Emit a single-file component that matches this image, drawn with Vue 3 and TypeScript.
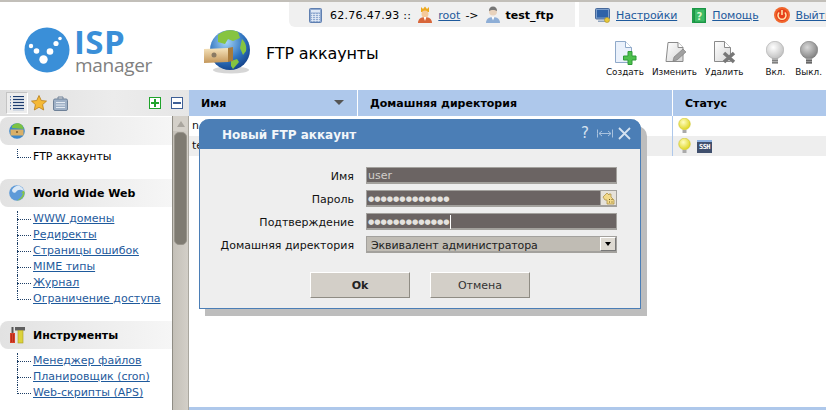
<script setup lang="ts">
interface Section { title: string; icon: string; links: string[]; plain?: boolean }
const sections: Section[] = [
  { title: 'Главное', icon: 'main', links: ['FTP аккаунты'], plain: true },
  { title: 'World Wide Web', icon: 'www', links: ['WWW домены', 'Редиректы', 'Страницы ошибок', 'MIME типы', 'Журнал', 'Ограничение доступа'] },
  { title: 'Инструменты', icon: 'tools', links: ['Менеджер файлов', 'Планировщик (cron)', 'Web-скрипты (APS)'] },
]
const dots = '●'.repeat(13)
</script>

<template>
  <div class="page">
    <svg width="0" height="0" class="defs">
      <defs>
        <radialGradient id="globe" cx="40%" cy="30%" r="75%">
          <stop offset="0" stop-color="#a8d6f7" /><stop offset=".6" stop-color="#2f74c0" /><stop offset="1" stop-color="#123f86" />
        </radialGradient>
        <linearGradient id="drawer" x1="0" y1="0" x2="0" y2="1">
          <stop offset="0" stop-color="#f6e4bd" /><stop offset="1" stop-color="#c4975a" />
        </linearGradient>
        <radialGradient id="bulbOff" cx="40%" cy="35%" r="70%">
          <stop offset="0" stop-color="#ffffff" /><stop offset="1" stop-color="#bdbdbd" />
        </radialGradient>
        <radialGradient id="bulbDim" cx="40%" cy="35%" r="70%">
          <stop offset="0" stop-color="#d8d8d8" /><stop offset="1" stop-color="#7d7d7d" />
        </radialGradient>
        <radialGradient id="bulbOn" cx="40%" cy="35%" r="70%">
          <stop offset="0" stop-color="#fffdc0" /><stop offset="1" stop-color="#dcd318" />
        </radialGradient>
        <linearGradient id="paper" x1="0" y1="0" x2="1" y2="1">
          <stop offset="0" stop-color="#ffffff" /><stop offset="1" stop-color="#d5d5d5" />
        </linearGradient>
      </defs>
    </svg>

    <div class="topline"></div>
    <div class="topbars">
      <div class="session">
        <svg width="13" height="15" viewBox="0 0 13 15"><rect x=".5" y=".5" width="12" height="14" rx="1" fill="#8fa9d0" stroke="#5f7fb0" /><rect x="2" y="2" width="9" height="2.500" fill="#dfe8f5" /><path d="M2 6.500h9M2 8.500h9M2 10.500h9M2 12.500h9M3.500 5.500v8M6.500 5.500v8M9.500 5.500v8" stroke="#e6edf7" stroke-width=".8" /></svg>
        <span class="ip">62.76.47.93 ::</span>
        <svg width="14" height="18" viewBox="0 0 14 18"><path d="M3 1l2 2 2-2.500 2 2.500 2-2v5H3z" fill="#eda91f" /><circle cx="7" cy="8" r="3.500" fill="#f5c99a" /><path d="M0 17c0-4 3-6 7-6s7 2 7 6z" fill="#d8663a" /><path d="M5.500 11L7 15l1.500-4z" fill="#fff" /></svg>
        <a class="link">root</a>
        <span class="arrow">-&gt;</span>
        <svg width="14" height="18" viewBox="0 0 14 18"><circle cx="7" cy="5.500" r="4" fill="#e8d2bc" /><path d="M3 5c0-3 1.500-4.500 4-4.500S11 2 11 5C9 3.500 5 3.500 3 5z" fill="#777" /><path d="M0 17c0-4 3-6 7-6s7 2 7 6z" fill="#8eaed6" /><path d="M5.500 11L7 14.500 8.500 11z" fill="#fff" /></svg>
        <b class="who">test_ftp</b>
      </div>
      <nav class="usernav">
        <svg width="15" height="15" viewBox="0 0 15 15"><rect x=".5" y=".5" width="14" height="10.500" rx="1" fill="#7d9fcc" stroke="#47699b" /><rect x="2" y="2" width="11" height="7.500" fill="#2e62a8" /><path d="M3 12.500h8v1.500H3z" fill="#8fa3bd" /><circle cx="12" cy="12" r="2.500" fill="#e8c93a" stroke="#a88d1c" stroke-width=".6" /></svg>
        <a class="link navlink">Настройки</a>
        <svg width="14" height="15" viewBox="0 0 14 15" class="nav-gap"><rect width="14" height="15" fill="#1f9d4b" /><rect x="2.500" y="1" width="10.500" height="13" fill="#3dbb66" stroke="#118539" stroke-width=".6" /><text x="7.500" y="11.500" text-anchor="middle" font-size="10" font-family="DejaVu Sans" font-weight="700" fill="#d9f7c8">?</text></svg>
        <a class="link navlink">Помощь</a>
        <svg width="16" height="16" viewBox="0 0 16 16" class="nav-gap"><circle cx="8" cy="8" r="8" fill="#f0662c" /><circle cx="8" cy="8" r="6" fill="#e8401a" /><path d="M5.200 5.500a4 4 0 1 0 5.600 0" fill="none" stroke="#ffe9b0" stroke-width="1.500" /><path d="M8 3v5" stroke="#ffe9b0" stroke-width="1.500" /></svg>
        <a class="link navlink">Выйти</a>
      </nav>
    </div>

    <header class="head">
      <div class="logo">
        <svg width="46" height="46" viewBox="0 0 46 46">
          <circle cx="23" cy="23" r="22.500" fill="#3a8fd8" />
          <g fill="#fff"><circle cx="19.500" cy="32.500" r="4.200" /><circle cx="26" cy="24.500" r="3.300" /><circle cx="12.500" cy="24" r="2.800" /><circle cx="7" cy="19" r="2.200" /><circle cx="32" cy="16.500" r="2.600" /><circle cx="36" cy="11.500" r="1.800" /></g>
        </svg>
        <div class="logotext"><span class="isp">ISP</span><span class="mgr">manager</span></div>
      </div>
      <svg class="pageicon" width="48" height="48" viewBox="0 0 48 48">
        <ellipse cx="27" cy="41" rx="18" ry="3.500" fill="#bbb" opacity=".6" />
        <circle cx="26" cy="21" r="20" fill="url(#globe)" />
        <path d="M14 6c5-5 14-6 20-3l2 6-7 3-5-2-3 5-7-2zM38 10c3 3 5 7 4 12l-3 4-3-7zM27 32l6-2 2 3-6 7-2-3z" fill="#86c440" />
        <path d="M0 20l24-1v14L0 34z" fill="url(#drawer)" />
        <path d="M24 19l5-1v14l-5 1z" fill="#a87b3c" />
        <circle cx="10" cy="26" r="2.500" fill="#8a7a63" />
      </svg>
      <h1 class="title">FTP аккаунты</h1>
      <div class="tools">
        <div class="tool">
          <svg width="24" height="24" viewBox="0 0 24 24"><path d="M2.500 .5h10l6 6v15h-16z" fill="#eaf1fb" stroke="#8fa9c9" /><path d="M12.500 .5v6h6" fill="#fff" stroke="#8fa9c9" /><path d="M15 10.500h4v4.500h4v4h-4v4.500h-4V19h-4.500v-4H15z" fill="#4cc04c" stroke="#2f9a38" /></svg>
          <span>Создать</span>
        </div>
        <div class="tool">
          <svg width="24" height="24" viewBox="0 0 24 24"><path d="M6 1.500h10l5 5v14H4z" fill="url(#paper)" stroke="#8a8a8a" /><path d="M16 1.500v5h5" fill="#fff" stroke="#8a8a8a" /><path d="M11 20l1-4 9-8 3 3-9 8z" fill="#a0a0a0" stroke="#777" stroke-width=".6" /></svg>
          <span>Изменить</span>
        </div>
        <div class="tool">
          <svg width="24" height="24" viewBox="0 0 24 24"><path d="M2.500 .5h10l6 6v14h-16z" fill="url(#paper)" stroke="#8a8a8a" /><path d="M12.500 .5v6h6" fill="#fff" stroke="#8a8a8a" /><path d="M12 12l10 9M22 12l-10 9" stroke="#777" stroke-width="3.500" /></svg>
          <span>Удалить</span>
        </div>
        <div class="tool tool-sep">
          <svg width="18" height="24" viewBox="0 0 18 24"><circle cx="9" cy="9" r="8.700" fill="url(#bulbOff)" stroke="#aaa" stroke-width=".6" /><path d="M6 17h6v6H6z" fill="#b0b0b0" /><path d="M6 19.500h6M6 21.500h6" stroke="#808080" /></svg>
          <span>Вкл.</span>
        </div>
        <div class="tool tool-last">
          <svg width="18" height="24" viewBox="0 0 18 24"><circle cx="9" cy="9" r="8.700" fill="url(#bulbDim)" stroke="#777" stroke-width=".6" /><path d="M6 17h6v6H6z" fill="#999" /><path d="M6 19.500h6M6 21.500h6" stroke="#666" /></svg>
          <span>Выкл.</span>
        </div>
      </div>
    </header>

    <main class="body">
      <aside class="side">
        <div class="sidetools">
          <div class="tab-active">
            <svg width="14" height="16" viewBox="0 0 14 16"><path d="M3 1.500h11M3 4.500h11M3 7.500h11M3 10.500h11M3 13.500h11" stroke="#1d3c6e" stroke-width="1.200" /><path d="M3 3h11M3 6h11M3 9h11M3 12h11M3 15h11" stroke="#a9bcd6" stroke-width=".8" /><path d="M.5 1v15" stroke="#5f7fb0" stroke-dasharray="1.500 1.500" /></svg>
          </div>
          <svg class="star" width="16" height="16" viewBox="0 0 16 16"><path d="M8 .5l2.300 5 5.200.6-3.900 3.500 1.100 5.400L8 12.300 3.300 15l1.100-5.400L.5 6.100l5.200-.6z" fill="#f5b935" stroke="#b97d18" stroke-width=".8" /></svg>
          <svg class="case" width="15" height="15" viewBox="0 0 15 15"><rect x=".5" y="3" width="14" height="11.500" rx="1.500" fill="#9eb0c6" stroke="#6e8198" /><path d="M5 3V1h5v2" fill="none" stroke="#6e8198" /><path d="M3 6.500h9M3 9h9M3 11.500h9" stroke="#e4ebf3" /></svg>
          <span class="spacer"></span>
          <span class="box plus"></span>
          <span class="box minus"></span>
        </div>
        <div class="sideflow">
          <div class="menu">
            <section v-for="s in sections" :key="s.title" class="sec">
              <div class="sechead">
                <svg v-if="s.icon === 'main'" width="16" height="16" viewBox="0 0 16 16"><circle cx="8" cy="8" r="7.800" fill="#3c87c9" /><path d="M3 3c3-3.500 7-3.500 10-1l2 4-12-1z" fill="#7cc343" /><path d="M1.500 6.500h13v6h-13z" fill="#d9b068" /><circle cx="8" cy="9" r="1" fill="#7a5a2a" /></svg>
                <svg v-else-if="s.icon === 'www'" width="16" height="16" viewBox="0 0 16 16"><circle cx="8" cy="8" r="7.800" fill="#5d9ad8" /><path d="M9 .5C12 1 15 4 15.500 7 13 4 9 4 7 7 5 9 3 7 3 5 4 3 6 1 9 .5z" fill="#dce9f6" /><path d="M15.500 7c.5 4-3 8.500-8 8.500 3-1 6-4 6.500-7.500l-2 .5 2.500-3z" fill="#88c640" /></svg>
                <svg v-else width="16" height="18" viewBox="0 0 16 18"><path d="M3.500 1v6" stroke="#555" stroke-width="2" /><path d="M1 7h5v10H1z" fill="#d8402a" /><path d="M2.500 8v8M4.500 8v8" stroke="#9c2212" stroke-width=".6" /><path d="M6 1h10v3.500H6z" fill="#5f5f5f" /><rect x="9" y="4.500" width="5" height="12.500" fill="#dcd23c" stroke="#a89d20" stroke-width=".6" /></svg>
                <b>{{ s.title }}</b>
              </div>
              <ul class="items">
                <li v-for="l in s.links" :key="l"><a :class="s.plain ? 'plain' : 'link'">{{ l }}</a></li>
              </ul>
            </section>
          </div>
          <div class="scroll">
            <div class="scroll-up"><i></i></div>
            <div class="scroll-thumb"></div>
          </div>
        </div>
      </aside>

      <section class="grid">
        <div class="gridhead">
          <div class="col c1">Имя<i class="sort"></i></div>
          <div class="col c2">Домашняя директория</div>
          <div class="col c3">Статус</div>
        </div>
        <div class="row">
          <div class="cell c1">n</div><div class="cell c2"></div>
          <div class="cell c3 st">
            <svg class="bulb" width="13" height="16" viewBox="0 0 13 16"><circle cx="6.500" cy="6" r="5.800" fill="url(#bulbOn)" stroke="#c7bd14" stroke-width=".5" /><path d="M4.500 12h4v3h-4z" fill="#aaa" /></svg>
          </div>
        </div>
        <div class="row alt">
          <div class="cell c1">te</div><div class="cell c2"></div>
          <div class="cell c3 st">
            <svg class="bulb" width="13" height="16" viewBox="0 0 13 16"><circle cx="6.500" cy="6" r="5.800" fill="url(#bulbOn)" stroke="#c7bd14" stroke-width=".5" /><path d="M4.500 12h4v3h-4z" fill="#aaa" /></svg>
            <span class="ssh">SSH</span>
          </div>
        </div>
        <div class="gridfill"></div>
        <div class="gridfoot"></div>
      </section>
    </main>

    <div class="dialog">
      <div class="dlghead">
        <span class="dlgtitle">Новый FTP аккаунт</span>
        <span class="dlgq">?</span>
        <svg class="dlgicon" width="16" height="11" viewBox="0 0 16 11"><path d="M.5 1.500c0 3 0 5 0 8M15.500 1.500v8M2 5.500h12M2 5.500l3-2.500M2 5.500l3 2.500M14 5.500l-3-2.500M14 5.500l-3 2.500" fill="none" stroke="#a9c2de" /></svg>
        <svg class="dlgicon" width="13" height="13" viewBox="0 0 13 13"><path d="M1 1l11 11M12 1L1 12" stroke="#d5e2f0" stroke-width="1.800" /></svg>
      </div>
      <form class="dlgbody" @submit.prevent>
        <label>Имя</label>
        <div class="field"><span class="val">user</span></div>
        <label>Пароль</label>
        <div class="field"><span class="val pw">{{ dots }}</span>
          <span class="gen"><svg width="13" height="13" viewBox="0 0 13 13"><path d="M1 5l4-4 2 2v-1h2v3l3 3v4H5V8H3z" fill="#f2d98a" stroke="#a88a3a" stroke-width=".7" /><path d="M7 7h1v1H7zM9.500 7h1v1h-1zM7 9.500h1v1H7zM9.500 9.500h1v1h-1z" fill="#6d5a20" /></svg></span>
        </div>
        <label>Подтверждение</label>
        <div class="field"><span class="val pw caret">{{ dots }}</span></div>
        <label>Домашняя директория</label>
        <div class="field select"><span class="val">Эквивалент администратора</span><span class="drop"><i></i></span></div>
        <div class="btns">
          <button class="btn strong" type="button">Ok</button>
          <button class="btn" type="button">Отмена</button>
        </div>
      </form>
    </div>
  </div>
</template>

<style>
html, body { margin: 0; background: #fff; overflow: hidden; }
</style>

<style scoped>
.page { position: relative; width: 826px; height: 410px; overflow: hidden; background: #fff; font: 11px "DejaVu Sans", sans-serif; color: #000; display: flex; flex-direction: column; }
.defs { position: absolute; }
.topline { height: 2px; background: #c2bfb9; flex: none; }
.topbars { display: flex; height: 25px; flex: none; padding-left: 289px; gap: 4px; white-space: nowrap; }
.session { width: 286px; box-sizing: border-box; background: #f0f0f0; border-bottom-left-radius: 6px; display: flex; align-items: center; padding: 1px 0 0 20px; }
.ip { margin: 0 7px 0 8px; letter-spacing: .28px; }
.arrow { margin: 0 7px 0 5px; }
.who { margin-left: 6px; }
.session .link { margin-left: 6px; }
.usernav { flex: 1; min-width: 0; background: #f0f0f0; display: flex; align-items: center; padding: 1px 0 0 16px; overflow: hidden; }
.navlink { margin-left: 6px; letter-spacing: -.1px; }
.nav-gap { margin-left: 15px; flex: none; }
.usernav svg { flex: none; }
.link { color: #1e5a9c; text-decoration: underline; }
.head { height: 63px; flex: none; display: flex; align-items: flex-start; }
.logo { display: flex; width: 155px; flex: none; margin-left: 24px; }
.logotext { display: flex; flex-direction: column; margin-left: 5px; }
.isp { color: #3a8fd8; font: 700 33px/24px "Open Sans", sans-serif; height: 24px; margin: 3px 0 0 -1px; letter-spacing: .4px; }
.mgr { color: #808080; font: 400 19px/18px "Open Sans", sans-serif; height: 18px; margin-top: 2px; letter-spacing: -.3px; }
.pageicon { margin: 2px 0 0 25px; flex: none; }
.title { font: 400 16px/20px "DejaVu Sans", sans-serif; margin: 17px 0 0 14px; letter-spacing: -.15px; }
.tools { margin-left: auto; display: flex; gap: 8px; padding: 14px 4px 0 0; color: #111; font-size: 8.8px; }
.tool { display: flex; flex-direction: column; align-items: center; }
.tool span { line-height: 14px; }
.tool-sep { margin-left: 14px; }
.tool-last { margin-left: 2px; }
.body { flex: 1; display: flex; min-height: 0; }
.side { width: 189px; flex: none; display: flex; flex-direction: column; }
.sidetools { height: 26px; flex: none; box-sizing: border-box; background: linear-gradient(90deg, #dedede, #ececec 60%, #e6e6e6); display: flex; align-items: center; padding: 0 6px 0 6px; }
.tab-active { width: 22px; height: 22px; box-sizing: border-box; border: 1px solid #fff; border-left-color: #c4c4c4; border-top-color: #c4c4c4; background: #ededed; display: flex; align-items: center; justify-content: center; }
.star { margin-left: 3px; flex: none; }
.case { margin-left: 6px; flex: none; }
.spacer { flex: 1; }
.box { width: 10px; height: 10px; border: 1px solid; position: relative; background: #fff; flex: none; }
.plus { color: #1fa32b; border-color: #1fa32b; margin-right: 10px; }
.minus { color: #3e5f96; border-color: #3e5f96; }
.box::before { content: ""; position: absolute; left: 1px; right: 1px; top: 4px; height: 2px; background: currentColor; }
.plus::after { content: ""; position: absolute; top: 1px; bottom: 1px; left: 4px; width: 2px; background: #1fa32b; }
.sideflow { flex: 1; display: flex; min-height: 0; }
.menu { width: 172px; flex: none; overflow: hidden; padding-top: 1px; }
.sec { margin-bottom: 14px; }
.sechead { height: 28px; display: flex; align-items: center; gap: 8px; padding-left: 9px; background: linear-gradient(90deg, #e2e2e2, #f6f6f6); border-radius: 8px 0 0 8px; }
.sechead svg { flex: none; width: 16px; }
.items { list-style: none; margin: 4px 0 0 17px; padding: 0; }
.items li { height: 16px; line-height: 16px; padding-left: 16px; position: relative; white-space: nowrap; }
.items li::before { content: ""; position: absolute; left: 0; top: 8px; width: 14px; border-top: 1px dotted #1e3f66; }
.items li::after { content: ""; position: absolute; left: 0; top: 0; height: 9px; border-left: 1px dotted #1e3f66; }
.items li:not(:last-child)::after { height: 16px; }
.plain { color: #000; }
.scroll { width: 17px; flex: none; box-sizing: border-box; background: linear-gradient(90deg, #c4c0b8, #d3cfc8); border-left: 1px solid #8f8c84; border-right: 1px solid #aaa79f; display: flex; flex-direction: column; }
.scroll-up { height: 15px; flex: none; background: #d4d0c9; display: flex; align-items: center; justify-content: center; }
.scroll-up i { width: 0; height: 0; border: 4px solid transparent; border-top: 0; border-bottom: 6px solid #a9a59e; }
.scroll-thumb { margin: 1px 1px 0; height: 113px; background: #7f7b72; border: 1px solid #98948b; border-radius: 5px; box-sizing: border-box; }
.grid { flex: 1; min-width: 0; display: flex; flex-direction: column; }
.gridhead { height: 26px; flex: none; display: flex; background: #aec8eb; font-weight: 700; }
.col { box-sizing: border-box; padding-left: 12px; position: relative; line-height: 27px; }
.c1 { width: 168px; flex: none; }
.c2 { width: 315px; flex: none; }
.c3 { flex: 1; min-width: 0; }
.col.c2, .col.c3 { border-left: 1px solid #fff; }
.sort { position: absolute; right: 13px; top: 10px; width: 0; height: 0; border: 5px solid transparent; border-bottom: 0; border-top: 5px solid #555; }
.row { height: 20px; flex: none; display: flex; }
.row.alt { background: #eee; }
.cell { box-sizing: border-box; padding-left: 3px; line-height: 20px; color: #111; }
.cell.c3 { border-left: 1px solid #aec8eb; }
.st { display: flex; align-items: center; padding-left: 5px; gap: 6px; }
.bulb { flex: none; }
.ssh { font: 700 7px/11px "DejaVu Sans Mono", monospace; background: #3f4f6d; color: #fff; border-top: 2px solid #8eb2e0; width: 15px; height: 11px; text-align: center; letter-spacing: -.5px; }
.gridfill { flex: 1; }
.gridfoot { height: 3px; background: #aec8eb; flex: none; }
.dialog { position: absolute; left: 199px; top: 119px; width: 442px; height: 190px; box-sizing: border-box; background: #eee; border: 1px solid #4b7eb6; border-top: 0; border-radius: 10px 10px 0 0; box-shadow: 6px 7px 0 #bdbdbd; display: flex; flex-direction: column; }
.dlghead { height: 30px; flex: none; margin: 0 -1px; background: #4b7eb6; border-radius: 10px 10px 0 0; display: flex; align-items: center; padding: 0 10px 0 23px; color: #fff; }
.dlgtitle { font-weight: 700; font-size: 12px; margin-right: auto; margin-top: 2px; color: #f2f6fa; }
.dlgq { font-size: 15px; font-weight: 400; color: #d5e2f0; line-height: 14px; margin: -3px 8px 0 0; }
.dlgicon { margin-top: -1px; margin-right: 5px; flex: none; }
.dlgicon:last-child { margin-right: 0; }
.dlgbody { display: grid; grid-template-columns: 154px 251px; grid-auto-rows: 17px; row-gap: 6px; column-gap: 12px; padding-top: 18px; align-content: start; }
.dlgbody label { text-align: right; line-height: 19px; color: #111; }
.field { box-sizing: border-box; width: 251px; height: 17px; background: #6b6463; border: 1px solid #a3a19d; border-bottom-width: 2px; display: flex; align-items: center; padding: 2px 0 0 1px; color: #d2cfcb; }
.val { line-height: 14px; white-space: nowrap; }
.pw { font-size: 7.2px; color: #e4e2df; margin-top: -1px; }
.caret { border-right: 1px solid #fff; height: 14px; }
.gen { margin: -2px 0 0 auto; width: 15px; height: 14px; background: #e6e2da; border-left: 1px solid #a3a19d; display: flex; align-items: center; justify-content: center; }
.select { background: #c0bcb4; color: #222; padding-left: 4px; padding-top: 3px; letter-spacing: -.1px; }
.drop { margin: -3px 0 0 auto; width: 16px; height: 14px; background: #dedad2; border: 1px solid; border-color: #fff #777 #777 #fff; box-sizing: border-box; display: flex; align-items: center; justify-content: center; }
.drop i { width: 0; height: 0; border: 3.500px solid transparent; border-bottom: 0; border-top: 4px solid #000; }
.btns { grid-column: 1 / -1; display: flex; gap: 20px; margin: 13px 0 0 110px; height: 26px; }
.btn { width: 100px; height: 26px; box-sizing: border-box; background: #d3cfc8; border: 1px solid; border-color: #fff #8f8c84 #8f8c84 #fff; font: 11px "DejaVu Sans", sans-serif; color: #333; padding: 0; }
.strong { font-weight: 700; color: #222; }
</style>
